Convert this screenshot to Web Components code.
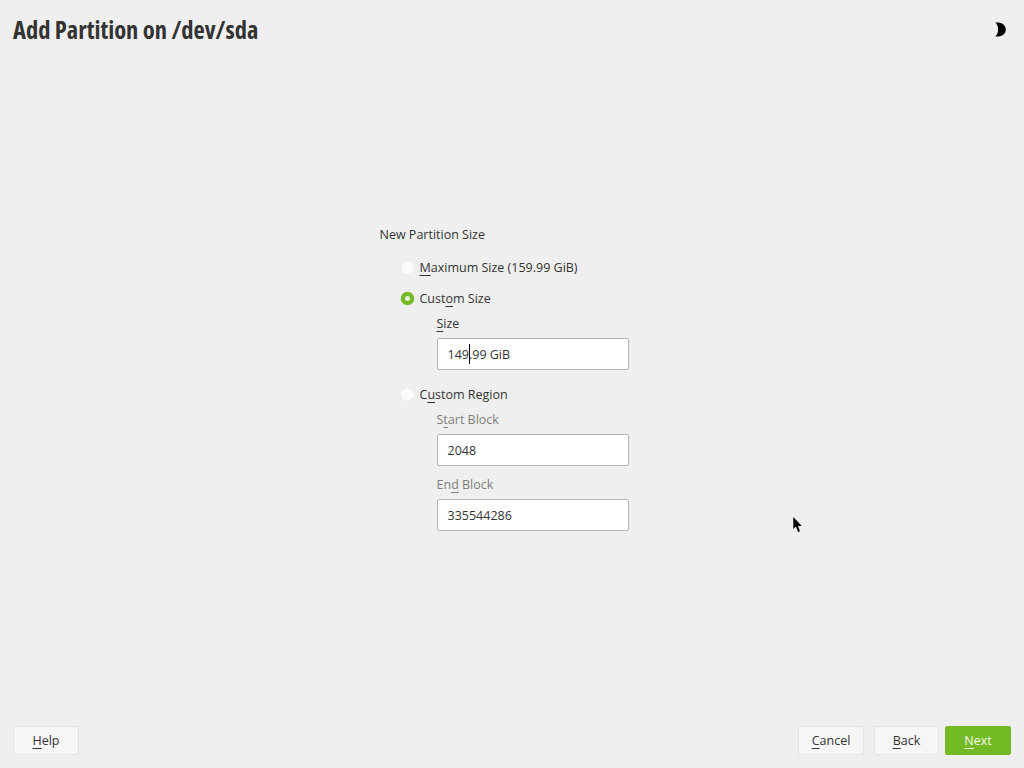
<!DOCTYPE html>
<html>
<head>
<meta charset="utf-8">
<title>Add Partition</title>
<style>
  html, body { margin: 0; height: 100%; }
  body { background: #efefef; color: #333333; font: 12.5px "Open Sans", "Noto Sans", sans-serif; overflow: hidden; }
  u { text-underline-offset: 3px; text-decoration-thickness: 1px; }
</style>
</head>
<body>
<template id="installer-page-tpl">
  <style>
    :host { display: flex; flex-direction: column; height: 768px; position: relative; }
    header { display: flex; justify-content: space-between; align-items: center; height: 60px; padding: 0 13px; }
    main { flex: 1; display: flex; justify-content: center; align-items: flex-start; padding-top: 164px; padding-right: 16px; }
    footer { display: flex; justify-content: space-between; padding: 0 13px 13px; }
    .right { display: flex; gap: 6px; }
    ::slotted([slot="left"]) { display: block; }
  </style>
  <header><slot name="title"></slot><slot name="theme"></slot></header>
  <main><slot></slot></main>
  <footer><slot name="left"></slot><div class="right"><slot name="right"></slot></div></footer>
  <slot name="overlay"></slot>
</template>

<template id="page-title-tpl">
  <style>
    :host { display: block; }
    h1 { margin: 0; font: 700 24.5px/30px "Open Sans", sans-serif; font-stretch: 75%; color: #333333; white-space: nowrap; }
  </style>
  <h1><slot></slot></h1>
</template>

<template id="theme-toggle-tpl">
  <style>
    :host { display: block; width: 11px; height: 15px; margin-right: 5px; margin-top: -1px; }
    svg { display: block; }
  </style>
  <svg width="11" height="15" viewBox="0 0 11 15"><path d="M0.3 0.6 C5.6 -0.4 10.8 2.4 10.8 7.5 C10.8 12.6 5.6 15.4 0.3 14.4 C4 11.6 4 3.4 0.3 0.6 Z" fill="#000"/></svg>
</template>

<template id="radio-option-tpl">
  <style>
    :host { display: flex; align-items: center; gap: 6px; height: 20px; color: #333333; }
    .dot { width: 13px; height: 13px; border-radius: 50%; background: #fbfbfb; box-shadow: 0 0 1px #dcdcdc; display: flex; align-items: center; justify-content: center; flex: none; }
    :host([checked]) .dot { background: #73ba25; box-shadow: 0 0 1px #73ba25; }
    :host([checked]) .dot::after { content: ""; width: 5px; height: 5px; border-radius: 50%; background: #e9f4dc; }
  </style>
  <span class="dot"></span><span><slot></slot></span>
</template>

<template id="text-field-tpl">
  <style>
    :host { display: block; margin-left: 36px; width: 192px; }
    label { display: block; height: 20px; line-height: 22px; margin-bottom: 5px; }
    :host([muted]) label { color: #7e7e7e; }
    .box { box-sizing: border-box; height: 32px; line-height: 32px; padding: 0 10px; background: #fff; border: 1px solid #b5b5b5; border-radius: 2px; color: #333333; white-space: nowrap; }
  </style>
  <label><slot name="label"></slot></label>
  <div class="box"><slot></slot></div>
</template>

<template id="text-caret-tpl">
  <style>
    :host { display: inline-block; width: 0; height: 20px; border-left: 1px solid #000; margin-right: -1px; vertical-align: -5px; }
  </style>
</template>

<template id="action-button-tpl">
  <style>
    :host { display: block; box-sizing: border-box; height: 29px; line-height: 27px; text-align: center; background: #f6f6f6; border: 1px solid #e2e2e2; border-radius: 2px; color: #333333; }
    :host([primary]) { background: #73ba25; border-color: #73ba25; color: #f4f9ec; }
  </style>
  <slot></slot>
</template>

<template id="size-form-tpl">
  <style>
    :host { display: flex; flex-direction: column; width: 249px; }
    .heading { height: 20px; line-height: 22px; margin-bottom: 13px; }
    .group { display: flex; flex-direction: column; margin-left: 21px; }
  </style>
  <div class="heading"><slot name="heading"></slot></div>
  <div class="group"><slot></slot></div>
</template>

<installer-page>
  <page-title slot="title">Add Partition on /dev/sda</page-title>
  <theme-toggle slot="theme"></theme-toggle>

  <size-form>
    <span slot="heading">New Partition Size</span>
    <radio-option style="margin-bottom:11px"><u>M</u>aximum Size (159.99 GiB)</radio-option>
    <radio-option checked style="margin-bottom:5px">Cust<u>o</u>m Size</radio-option>
    <text-field style="margin-bottom:14px"><span slot="label"><u>S</u>ize</span>149<text-caret></text-caret>.99 GiB</text-field>
    <radio-option style="margin-bottom:5px">C<u>u</u>stom Region</radio-option>
    <text-field muted style="margin-bottom:8px"><span slot="label">S<u>t</u>art Block</span>2048</text-field>
    <text-field muted><span slot="label">En<u>d</u> Block</span>335544286</text-field>
  </size-form>

  <action-button slot="left" style="width:66px"><u>H</u>elp</action-button>
  <action-button slot="right" style="width:66px;margin-right:4px"><u>C</u>ancel</action-button>
  <action-button slot="right" style="width:65px"><u>B</u>ack</action-button>
  <action-button slot="right" primary style="width:66px"><u>N</u>ext</action-button>

  <mouse-pointer slot="overlay"></mouse-pointer>
</installer-page>

<template id="mouse-pointer-tpl">
  <style>
    :host { position: absolute; left: 793px; top: 517px; width: 11px; height: 17px; }
    svg { display: block; }
  </style>
  <svg width="11" height="17" viewBox="0 0 11 17"><path d="M0.3 0 L0.3 12 L3 9.6 L5 15 L7 14.2 L5 9 L8.8 9 Z" fill="#000"/></svg>
</template>

<script>
  // every element here is just a template stamped into an open shadow root
  function define(name) {
    customElements.define(name, class extends HTMLElement {
      constructor() {
        super();
        this.attachShadow({ mode: 'open' });
        this.shadowRoot.append(document.getElementById(name + '-tpl').content.cloneNode(true));
      }
    });
  }

  ['installer-page', 'page-title', 'theme-toggle', 'radio-option', 'text-field',
    'text-caret', 'action-button', 'size-form', 'mouse-pointer'].forEach(define);
</script>
</body>
</html>
